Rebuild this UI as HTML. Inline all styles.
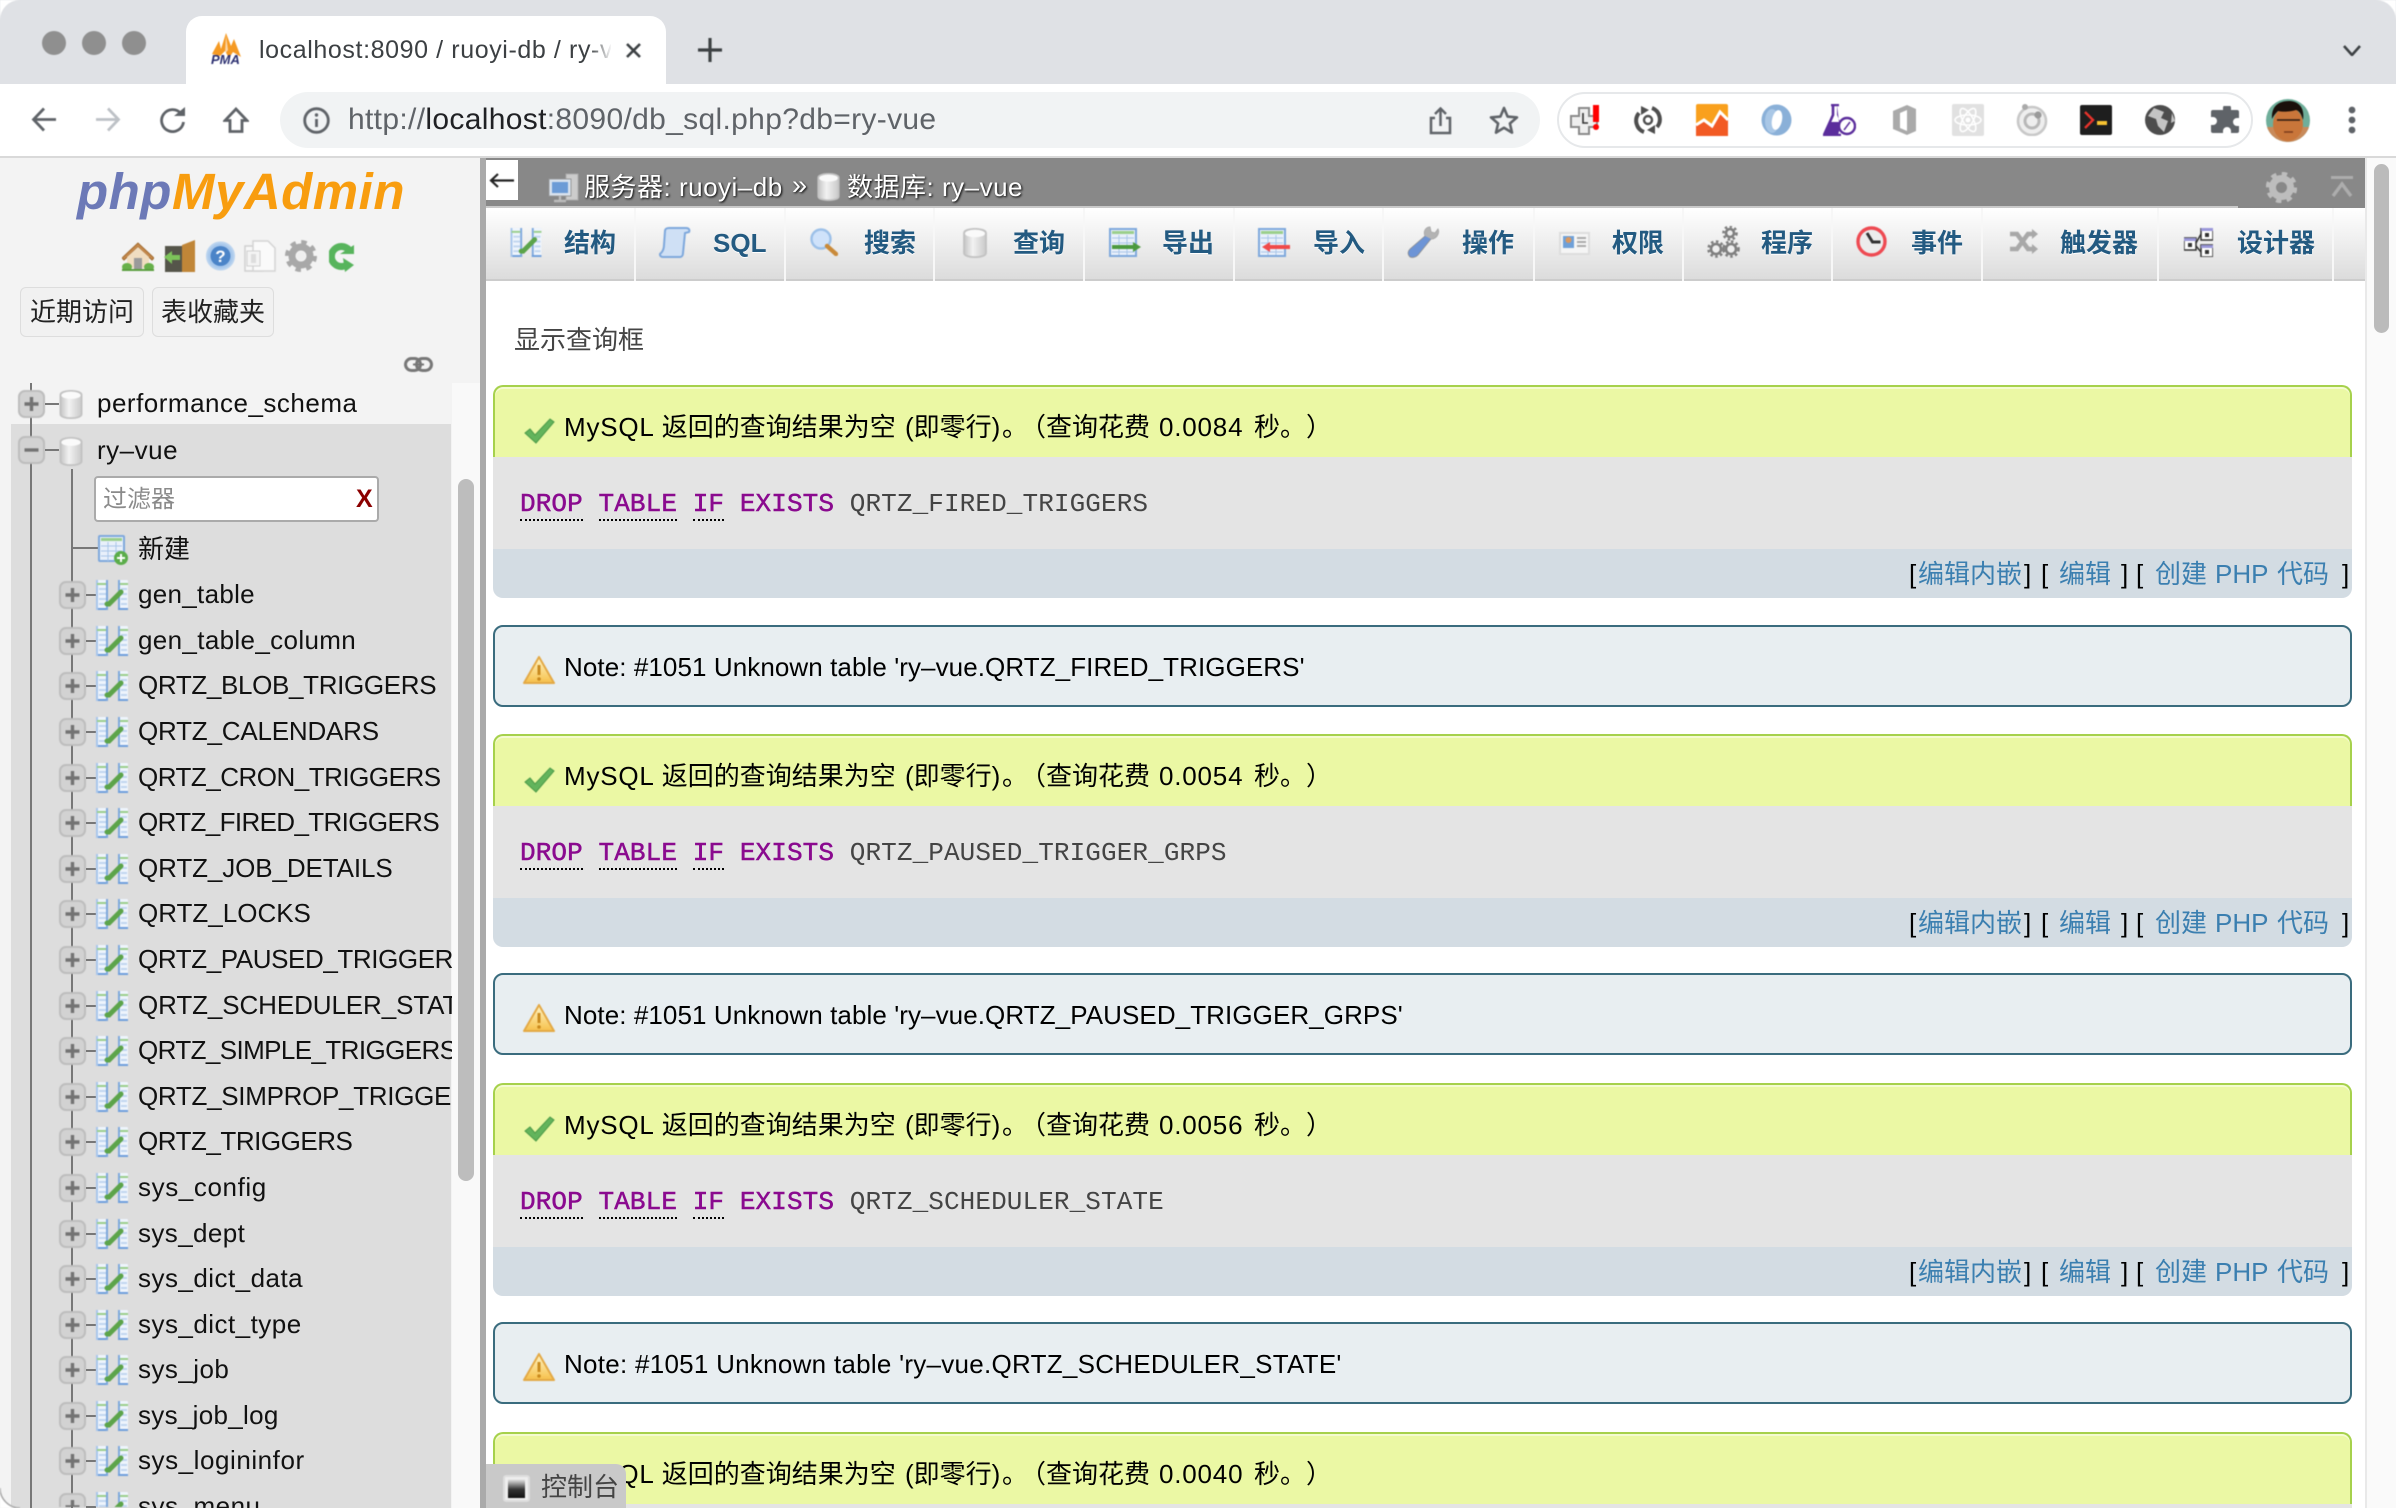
<!DOCTYPE html>
<html lang="zh">
<head>
<meta charset="utf-8">
<title>localhost:8090 / ruoyi-db / ry-vue</title>
<style>
html,body{margin:0;padding:0;width:2396px;height:1508px;overflow:hidden;background:#fff}
body{position:relative;font-family:"Liberation Sans","Noto Sans CJK SC",sans-serif;font-size:26px;color:#000}
.a{position:absolute;display:block}
svg.a,.r svg,.okh svg,.nt svg{filter:blur(.4px)}
.t{position:absolute;white-space:nowrap}
#strip{left:0;top:0;width:2396px;height:84px;background:#dfe1e5}
#tab{left:186px;top:16px;width:480px;height:68px;background:#fff;border-radius:16px 16px 0 0}
#toolbar{left:0;top:84px;width:2396px;height:72px;background:#fff}
#tbline{left:0;top:156px;width:2396px;height:2px;background:#d9d9d9}
#omni{left:280px;top:92px;width:1260px;height:56px;border-radius:28px;background:#f1f3f4}
#pill{left:1557px;top:92px;width:692px;height:52px;border:2px solid #e6e8ea;border-radius:28px}
#side{left:0;top:158px;width:480px;height:1350px;background:#f3f3f3;overflow:hidden}
#sb{left:452px;top:383px;width:28px;height:1125px;background:#f9f9f9}
#sbt{left:458px;top:479px;width:16px;height:702px;border-radius:8px;background:#bdbdbd}
#sel{left:11px;top:424px;width:440px;height:1084px;background:#ddd}
#split{left:480px;top:158px;width:6px;height:1350px;background:#aaa}
.btn{top:287px;height:48px;border:1px solid #ddd;border-radius:6px;background:#f1f1f1;line-height:48px;text-align:center;box-sizing:content-box;color:#222}
#tree{left:0;top:572.2px;width:452px;height:935.8px;overflow:hidden}
.r{position:relative;height:45.6px}
.r span{position:absolute;left:138px;top:0;line-height:45.6px;white-space:nowrap;color:#111}
.r svg{position:absolute}
.r .pb{left:59px;top:9px;width:27px;height:28px}
.r .h{position:absolute;left:86px;top:22px;width:10px;height:2px;background:#777}
.r .ti{left:96px;top:8px;width:32px;height:30px}
#topbar{left:486px;top:158px;width:1879px;height:48px;background:#888}
#topbar2{left:486px;top:206px;width:1752px;height:2px;background:#c9c9c9}
#topbar3{left:2238px;top:206px;width:127px;height:3px;background:#888}
#tabs{left:486px;top:208px;width:1879px;height:71px;background:linear-gradient(#fff,#dcdcdc);border-bottom:2px solid #ccc}
.sep{position:absolute;top:208px;width:2px;height:73px;background:#f7f7f7}
.tl{position:absolute;top:222px;line-height:42px;font-weight:700;color:#235a81;white-space:nowrap;text-shadow:0 1px 0 #fff}
.bc{position:absolute;top:167px;line-height:40px;color:#fff;white-space:nowrap;letter-spacing:.5px;text-shadow:1px 1px 2px #000}
#sct{left:2365px;top:158px;width:31px;height:1350px;background:#fafafa;border-left:2px solid #e9e9e9;box-sizing:border-box}
#sctt{left:2374px;top:164px;width:15px;height:169px;border-radius:8px;background:#bbb}
.ok{position:absolute;left:493px;width:1859px;height:213px}
.okh{position:absolute;left:0;top:0;width:1859px;height:72px;box-sizing:border-box;background:#ebf8a4;border:2px solid #a6d14c;border-bottom:0;border-radius:10px 10px 0 0;box-shadow:inset 0 2px 0 #f4fbd0}
.okh svg{position:absolute;left:28px;top:31px;width:32px;height:26px}
.okh span{position:absolute;left:69px;top:18px;line-height:44px;white-space:nowrap;color:#000;text-spacing-trim:space-all}
.okh i{font-style:normal;letter-spacing:.8px}
.okh .s2{left:410px}.okh .s3{left:507px}.okh .s4{left:525px}.okh .s5{left:664px;letter-spacing:.8px}.okh .s6{left:759px}
.code{position:absolute;left:0;top:72px;width:1859px;height:92px;background:#e4e4e4;font-family:"Liberation Mono",monospace;color:#444;font-size:26px}
.code div{position:absolute;left:27px;top:25px;line-height:44px;white-space:pre;letter-spacing:.1px}
.code b{color:#8a0a8f;font-weight:400;-webkit-text-stroke:.5px #8a0a8f}
.code u{text-decoration:none;border-bottom:2px dotted #000;padding-bottom:0}
.ft{position:absolute;left:0;top:164px;width:1859px;height:49px;background:#d3dce3;border-radius:0 0 10px 10px;color:#000}
.ft s,.ft em{position:absolute;top:2px;line-height:46px;text-decoration:none;font-style:normal;white-space:nowrap}
.ft em{color:#3b7fb0}
.nt{position:absolute;left:493px;width:1859px;height:82px;box-sizing:border-box;background:#e8eef1;border:2px solid #3a6c7e;border-radius:10px}
.nt svg{position:absolute;left:28px;top:28px;width:32px;height:30px}
.nt span{position:absolute;left:69px;top:18px;line-height:44px;white-space:nowrap;color:#000}
#con{left:486px;top:1464px;width:140px;height:44px;background:#c9c9c9;border-radius:0 10px 0 0}
</style>
</head>
<body>
<svg width="0" height="0" style="position:absolute">
<defs>
<linearGradient id="gd" x1="0" x2="1" y1="0" y2="0"><stop offset="0" stop-color="#c4c4c4"/><stop offset=".4" stop-color="#f2f2f2"/><stop offset="1" stop-color="#c9c9c9"/></linearGradient>
<linearGradient id="gw" x1="0" x2="0" y1="0" y2="1"><stop offset="0" stop-color="#fff6c8"/><stop offset="1" stop-color="#f6c04a"/></linearGradient>
<linearGradient id="gc" x1="0" x2="0" y1="0" y2="1"><stop offset="0" stop-color="#eee"/><stop offset=".55" stop-color="#333"/><stop offset="1" stop-color="#111"/></linearGradient>
<symbol id="p" viewBox="0 0 27 28"><rect x="1" y="1" width="25" height="26" rx="6" fill="#d2d2d2" stroke="#bdbdbd" stroke-width="2"/><path d="M13.500 7v14M6.500 14h14" stroke="#737373" stroke-width="3.400"/></symbol>
<symbol id="m" viewBox="0 0 27 28"><rect x="1" y="1" width="25" height="26" rx="6" fill="#d2d2d2" stroke="#bdbdbd" stroke-width="2"/><path d="M6.500 14h14" stroke="#737373" stroke-width="3.400"/></symbol>
<symbol id="t" viewBox="0 0 32 30">
<rect x="0" y="0" width="12" height="30" rx="1" fill="#eef4fc"/><rect x="0" y="28" width="12" height="2" fill="#6f9fdc"/><rect x="10" y="0" width="2" height="30" fill="#7ea8dc"/><rect x="0" y="0" width="2" height="30" fill="#a8c6ec"/><rect x="1" y="3" width="9" height="2" fill="#9bcf8c"/><path d="M3 9h7M3 14h7M3 19h7M3 24h7" stroke="#c0d5ef" stroke-width="2"/>
<rect x="22" y="0" width="10" height="30" rx="1" fill="#eef4fc"/><rect x="22" y="0" width="2" height="30" fill="#7ea8dc"/><rect x="22" y="28" width="10" height="2" fill="#6f9fdc"/><rect x="24" y="3" width="8" height="2" fill="#9bcf8c"/><path d="M25 9h6M25 14h6M25 19h6M25 24h6" stroke="#c0d5ef" stroke-width="2"/>
<path d="M11 24l2 0L25 12" fill="none" stroke="#5ca44a" stroke-width="5" stroke-linecap="round"/></symbol>
<symbol id="db" viewBox="0 0 24 30"><path d="M1 5c0-5.500 22-5.500 22 0v20c0 5.500-22 5.500-22 0z" fill="url(#gd)" stroke="#c2c2c2" stroke-width="1.800"/><ellipse cx="12" cy="5.500" rx="10" ry="3.800" fill="#fafafa"/></symbol>
<symbol id="ck" viewBox="0 0 32 26"><path d="M2 15l5-4 5 6L27 1l4 3-18 21z" fill="#63b45c" stroke="#4b9a48" stroke-width="1"/></symbol>
<symbol id="wn" viewBox="0 0 32 30"><path d="M16 2L31 28H1z" fill="url(#gw)" stroke="#e3a946" stroke-width="2" stroke-linejoin="round"/><path d="M16 10v10" stroke="#c98a1e" stroke-width="3"/><circle cx="16" cy="24" r="1.800" fill="#c98a1e"/></symbol>
<symbol id="gr" viewBox="0 0 32 32"><circle cx="16" cy="16" r="9" fill="none" stroke="#a8a8a8" stroke-width="7"/><circle cx="16" cy="16" r="13.500" fill="none" stroke="#a8a8a8" stroke-width="5" stroke-dasharray="5.300 5.300"/><circle cx="16" cy="16" r="4.500" fill="#eee"/></symbol>
</defs>
</svg>

<!-- browser chrome -->
<div class="a" id="strip"></div>
<svg class="a" style="left:42px;top:31px" width="104" height="24"><circle cx="12" cy="12" r="12" fill="#8f8f8f"/><circle cx="52" cy="12" r="12" fill="#8f8f8f"/><circle cx="92" cy="12" r="12" fill="#8f8f8f"/></svg>
<div class="a" id="tab"></div>
<svg class="a" style="left:210px;top:33px" width="33" height="32" viewBox="0 0 33 32"><path d="M2 21L9 8l2 8 5-16 5 13 3-7 7 18-8-5-4 6-4-7-5 5z" fill="#f59a23"/><path d="M16 2l2 15-3 4z" fill="#fff" opacity=".6"/><text x="1" y="31" font-family="Liberation Sans" font-size="13" font-style="italic" font-weight="700" fill="#2b2f70">PMA</text></svg>
<div class="t" style="left:259px;top:33px;width:352px;overflow:hidden;font-size:25px;letter-spacing:.6px;line-height:34px;color:#3c4043">localhost:8090 / ruoyi-db / ry-vue</div>
<div class="a" style="left:590px;top:30px;width:22px;height:38px;background:linear-gradient(90deg,rgba(255,255,255,0),#fff)"></div>
<svg class="a" style="left:625px;top:43px" width="17" height="15"><path d="M2 1l13 13M15 1L2 14" stroke="#3c4043" stroke-width="2.600"/></svg>
<svg class="a" style="left:698px;top:38px" width="24" height="24"><path d="M12 0v24M0 12h24" stroke="#3c4043" stroke-width="3.200"/></svg>
<svg class="a" style="left:2343px;top:45px" width="18" height="11"><path d="M1 1l8 9 8-9" fill="none" stroke="#3c4043" stroke-width="2.600"/></svg>
<div class="a" id="toolbar"></div>
<div class="a" id="tbline"></div>
<svg class="a" style="left:31px;top:107px" width="26" height="25"><path d="M25 12.500H3M13 1.500L2.500 12.500 13 23.500" fill="none" stroke="#5f6368" stroke-width="2.800"/></svg>
<svg class="a" style="left:95px;top:107px" width="26" height="25"><path d="M1 12.500h22M13 1.500l10.500 11L13 23.500" fill="none" stroke="#bdc1c6" stroke-width="2.800"/></svg>
<svg class="a" style="left:159px;top:107px" width="28" height="26"><path d="M22 6.500A11 11 0 1 0 24.500 15" fill="none" stroke="#5f6368" stroke-width="2.800"/><path d="M15 9h11V0z" fill="#5f6368"/></svg>
<svg class="a" style="left:223px;top:107px" width="26" height="26"><path d="M13 2L2 13.500h5v11h12v-11h5z" fill="none" stroke="#5f6368" stroke-width="2.800" stroke-linejoin="miter"/></svg>
<div class="a" id="omni"></div>
<svg class="a" style="left:303px;top:107px" width="27" height="27"><circle cx="13.500" cy="13.500" r="11.800" fill="none" stroke="#5f6368" stroke-width="2.800"/><path d="M13.500 12v8" stroke="#5f6368" stroke-width="2.800"/><circle cx="13.500" cy="8" r="1.700" fill="#5f6368"/></svg>
<div class="t" style="left:348px;top:100px;font-size:30px;letter-spacing:.33px;line-height:40px;color:#5f6368">http://<span style="color:#202124">localhost</span>:8090/db_sql.php?db=ry-vue</div>
<svg class="a" style="left:1429px;top:107px" width="23" height="28"><path d="M6 11H2v15h19V11h-4M11.500 19V2M6 7l5.500-5.500L17 7" fill="none" stroke="#5f6368" stroke-width="2.500"/></svg>
<svg class="a" style="left:1489px;top:106px" width="30" height="28"><path d="M15 2l3.600 8.600 9.400.8-7.100 6.100 2.100 9.100-8-4.800-8 4.800 2.100-9.100L2 11.400l9.400-.8z" fill="none" stroke="#5f6368" stroke-width="2.600" stroke-linejoin="round"/></svg>
<div class="a" id="pill"></div>
<svg class="a" style="left:1569px;top:105px" width="32" height="30"><path d="M10 3h10v8h8v11h-8v7H10v-7H2V11h8z" fill="#eee" stroke="#8a8a8a" stroke-width="2"/><path d="M14 8v10h5" fill="none" stroke="#333" stroke-width="1.600"/><rect x="24" y="0" width="6" height="17" fill="#f00"/><circle cx="27" cy="22" r="3" fill="#f00"/></svg>
<svg class="a" style="left:1633px;top:105px" width="30" height="30"><path d="M6 8A12 12 0 0 0 11 27M24 22A12 12 0 0 0 19 3" fill="none" stroke="#4e4e4e" stroke-width="4"/><path d="M8 1l8 4-8 5zM22 29l-8-4 8-5z" fill="#4e4e4e"/><circle cx="15" cy="15" r="4" fill="none" stroke="#4e4e4e" stroke-width="2.400"/></svg>
<svg class="a" style="left:1696px;top:104px" width="32" height="32"><rect width="32" height="32" rx="2" fill="#f9a01d"/><path d="M0 32V21l8-5 8 6 8-14 8 8v16z" fill="#f25a24"/><path d="M0 21l8-5 8 6 8-14 8 8" fill="none" stroke="#fff" stroke-width="3"/></svg>
<svg class="a" style="left:1760px;top:104px" width="33" height="32"><ellipse cx="16.500" cy="16" rx="15" ry="15.500" fill="#8ab0d8"/><ellipse cx="12" cy="17" rx="7" ry="12" fill="#a9c7e6"/><ellipse cx="17" cy="16" rx="5" ry="10" fill="#fff" transform="rotate(12 17 16)"/></svg>
<svg class="a" style="left:1823px;top:104px" width="33" height="32"><path d="M8 1h8M10 1v10L1 31h17" fill="none" stroke="#5b2d9c" stroke-width="2.600"/><path d="M14 1v10l4 9-3 11H1l6-13h9z" fill="#5b2d9c"/><circle cx="24" cy="22" r="8" fill="#fff" stroke="#5b2d9c" stroke-width="2.400"/><path d="M21 26l6-8" stroke="#5b2d9c" stroke-width="1.500"/></svg>
<svg class="a" style="left:1890px;top:104px" width="27" height="32"><path d="M3 7L17 1l9 4v22l-9 4L3 25z" fill="#aaa"/><path d="M10 9l7-3v21l-7-3z" fill="#fff"/></svg>
<svg class="a" style="left:1952px;top:104px" width="32" height="32"><rect width="32" height="32" rx="2" fill="#e1e1e1"/><g fill="none" stroke="#fff" stroke-width="1.600"><ellipse cx="16" cy="16" rx="13" ry="5"/><ellipse cx="16" cy="16" rx="13" ry="5" transform="rotate(60 16 16)"/><ellipse cx="16" cy="16" rx="13" ry="5" transform="rotate(120 16 16)"/></g><circle cx="16" cy="16" r="2.500" fill="#fff"/></svg>
<svg class="a" style="left:2016px;top:104px" width="32" height="32"><circle cx="16" cy="17" r="14" fill="#eee" stroke="#c8c8c8" stroke-width="2.600"/><circle cx="16" cy="17" r="7" fill="none" stroke="#b8b8b8" stroke-width="3"/><circle cx="22" cy="11" r="3.600" fill="#9a9a9a"/><circle cx="9" cy="3" r="3" fill="#aaa"/></svg>
<svg class="a" style="left:2080px;top:105px" width="32" height="30"><rect width="32" height="30" rx="2" fill="#1e1e1e"/><path d="M5 7l8 8-8 8" fill="none" stroke="#e8332b" stroke-width="2.400"/><rect x="17" y="16" width="10" height="4" fill="#f7c331"/></svg>
<svg class="a" style="left:2145px;top:105px" width="30" height="30"><circle cx="15" cy="15" r="15" fill="#4d4d4d"/><path d="M9 3l10 4-3 6 7 3-4 11-6-6-2-7-8-3zM27 8l3 8-4 2z" fill="#c4c4c4"/></svg>
<svg class="a" style="left:2210px;top:106px" width="29" height="28"><path d="M9 5h4V3a4 4 0 0 1 8 0v2h6a2 2 0 0 1 2 2v6h-2a4 4 0 0 0 0 8h2v5a2 2 0 0 1-2 2h-6v-2a4 4 0 0 0-8 0v2H3a2 2 0 0 1-2-2v-6h2a4 4 0 0 0 0-8H1V7a2 2 0 0 1 2-2z" transform="translate(0 -1)" fill="#5f6368"/></svg>
<svg class="a" style="left:2266px;top:99px" width="44" height="43"><clipPath id="av"><ellipse cx="22" cy="21.500" rx="22" ry="21.500"/></clipPath><g clip-path="url(#av)"><rect width="44" height="43" fill="#6fae9a"/><rect y="28" width="44" height="15" fill="#c88a5a"/><ellipse cx="22" cy="25" rx="15" ry="17" fill="#c9763a"/><path d="M6 20C5 6 14 2 23 2s16 6 14 19c-2-7-4-9-7-10-6 2-14 2-18 1-2 2-4 4-6 8z" fill="#1a0f0a"/><path d="M11 21h9M25 21h9M20 21h5" stroke="#2a1a10" stroke-width="1.600"/><path d="M18 33h9" stroke="#7c3b1c" stroke-width="1.600"/></g></svg>
<svg class="a" style="left:2348px;top:106px" width="8" height="28"><circle cx="4" cy="4" r="3.400" fill="#5f6368"/><circle cx="4" cy="14" r="3.400" fill="#5f6368"/><circle cx="4" cy="24" r="3.400" fill="#5f6368"/></svg>

<!-- sidebar -->
<div class="a" id="side"></div>
<div class="a" id="sb"></div>
<div class="a" id="sbt"></div>
<div class="a" id="sel"></div>
<div class="t" style="left:77px;top:163px;font-size:51px;line-height:58px;font-weight:700;font-style:italic;letter-spacing:.5px;color:#f89d0f"><span style="color:#6c79b7">php</span>MyAdmin</div>
<svg class="a" style="left:122px;top:241px" width="32" height="30"><path d="M16 2L0 17l2 2L16 6l14 13 2-2z" fill="#c68a4e" stroke="#a0692c"/><path d="M5 16L16 6l11 10v11H5z" fill="#f0ddc0"/><rect x="12" y="17" width="8" height="11" fill="#9a9a9a"/><ellipse cx="5" cy="26" rx="5" ry="4" fill="#67b04a"/><ellipse cx="27" cy="26" rx="5" ry="4" fill="#67b04a"/><rect x="0" y="28" width="32" height="2" fill="#5a9e3e"/></svg>
<svg class="a" style="left:163px;top:240px" width="32" height="32"><rect x="2" y="6" width="17" height="26" fill="#55554a"/><path d="M19 5l13-5v32H19z" fill="#c08638"/><path d="M1 17l8-6v4h8v5H9v4z" fill="#7dc35a"/></svg>
<svg class="a" style="left:206px;top:241px" width="29" height="30"><circle cx="14.500" cy="15" r="13.500" fill="#a8c8ec" stroke="#b8d2ee" stroke-width="2"/><circle cx="14.500" cy="15" r="10" fill="#4b84c8"/><text x="14.500" y="21" text-anchor="middle" font-family="Liberation Sans" font-size="17" font-weight="700" fill="#fff">?</text></svg>
<svg class="a" style="left:244px;top:240px" width="32" height="32"><rect x="1" y="6" width="18" height="25" fill="#f8f8f8" stroke="#cfcfcf" stroke-width="1.500"/><path d="M9 1h15l7 7v23H9z" fill="#fafafa" stroke="#d4d4d4" stroke-width="1.500"/><rect x="3" y="11" width="13" height="15" fill="#f4f4f4" stroke="#d0d0d0"/><rect x="7" y="14" width="5" height="9" fill="#ddd"/></svg>
<svg class="a" style="left:285px;top:240px" width="32" height="32"><use href="#gr"/></svg>
<svg class="a" style="left:329px;top:243px" width="26" height="29"><path d="M20 7A10 10 0 1 0 20 20" fill="none" stroke="#57b45c" stroke-width="7"/><path d="M11 11h14V2zM14 15l11 7-9 7z" fill="#57b45c"/></svg>
<div class="t btn" style="left:20px;width:122px">近期访问</div>
<div class="t btn" style="left:152px;width:120px">表收藏夹</div>
<svg class="a" style="left:404px;top:357px" width="29" height="15"><rect x="1.500" y="1.500" width="15" height="12" rx="6" fill="none" stroke="#777" stroke-width="3"/><rect x="12.500" y="1.500" width="15" height="12" rx="6" fill="none" stroke="#777" stroke-width="3"/><path d="M9 7.500h11" stroke="#777" stroke-width="2"/></svg>

<div class="a" style="left:30px;top:383px;width:2px;height:1125px;background:#777"></div>
<div class="a" style="left:71px;top:469px;width:2px;height:1039px;background:#777"></div>
<svg class="a" style="left:18px;top:390px;width:27px;height:28px"><use href="#p"/></svg>
<div class="a" style="left:45px;top:403px;width:14px;height:2px;background:#777"></div>
<svg class="a" style="left:59px;top:390px;width:24px;height:29px"><use href="#db"/></svg>
<div class="t" style="left:97px;top:380px;line-height:46px;letter-spacing:.5px;color:#111">performance_schema</div>
<svg class="a" style="left:18px;top:436px;width:27px;height:28px"><use href="#m"/></svg>
<div class="a" style="left:45px;top:449px;width:14px;height:2px;background:#777"></div>
<svg class="a" style="left:59px;top:437px;width:24px;height:29px"><use href="#db"/></svg>
<div class="t" style="left:97px;top:427px;line-height:46px;letter-spacing:.5px;color:#111">ry–vue</div>
<div class="a" style="left:94px;top:476px;width:281px;height:42px;background:#fff;border:2px solid #aaa;border-radius:4px"></div>
<div class="t" style="left:103px;top:479px;font-size:24px;line-height:42px;color:#8a8a8a">过滤器</div>
<div class="t" style="left:356px;top:478px;font-size:25px;line-height:42px;font-weight:700;color:#8b0000">X</div>
<div class="a" style="left:72px;top:547px;width:26px;height:2px;background:#777"></div>
<svg class="a" style="left:98px;top:535px" width="30" height="30"><rect x="1" y="1" width="25" height="25" rx="1" fill="#e8f0fb" stroke="#7ea8dc" stroke-width="2"/><rect x="3" y="3" width="21" height="3" fill="#9bcf8c"/><path d="M3 11h21M3 16h21M3 21h21M10 7v19M18 7v19" stroke="#a9c5e8"/><circle cx="23" cy="23" r="7" fill="#5bad4a"/><path d="M23 19v8M19 23h8" stroke="#fff" stroke-width="2"/></svg>
<div class="t" style="left:138px;top:526px;line-height:46px;color:#111">新建</div>

<div class="a" id="tree">
<div class="r"><svg class="pb"><use href="#p"/></svg><i class="h"></i><svg class="ti"><use href="#t"/></svg><span style="letter-spacing:.3px">gen_table</span></div>
<div class="r"><svg class="pb"><use href="#p"/></svg><i class="h"></i><svg class="ti"><use href="#t"/></svg><span style="letter-spacing:.35px">gen_table_column</span></div>
<div class="r"><svg class="pb"><use href="#p"/></svg><i class="h"></i><svg class="ti"><use href="#t"/></svg><span style="letter-spacing:-.34px">QRTZ_BLOB_TRIGGERS</span></div>
<div class="r"><svg class="pb"><use href="#p"/></svg><i class="h"></i><svg class="ti"><use href="#t"/></svg><span style="letter-spacing:-.2px">QRTZ_CALENDARS</span></div>
<div class="r"><svg class="pb"><use href="#p"/></svg><i class="h"></i><svg class="ti"><use href="#t"/></svg><span style="letter-spacing:-.5px">QRTZ_CRON_TRIGGERS</span></div>
<div class="r"><svg class="pb"><use href="#p"/></svg><i class="h"></i><svg class="ti"><use href="#t"/></svg><span style="letter-spacing:-.63px">QRTZ_FIRED_TRIGGERS</span></div>
<div class="r"><svg class="pb"><use href="#p"/></svg><i class="h"></i><svg class="ti"><use href="#t"/></svg><span style="letter-spacing:-.1px">QRTZ_JOB_DETAILS</span></div>
<div class="r"><svg class="pb"><use href="#p"/></svg><i class="h"></i><svg class="ti"><use href="#t"/></svg><span>QRTZ_LOCKS</span></div>
<div class="r"><svg class="pb"><use href="#p"/></svg><i class="h"></i><svg class="ti"><use href="#t"/></svg><span style="left:138px;width:314px;overflow:hidden;letter-spacing:-.4px">QRTZ_PAUSED_TRIGGER_GRPS</span></div>
<div class="r"><svg class="pb"><use href="#p"/></svg><i class="h"></i><svg class="ti"><use href="#t"/></svg><span style="width:314px;overflow:hidden;letter-spacing:-.1px">QRTZ_SCHEDULER_STATE</span></div>
<div class="r"><svg class="pb"><use href="#p"/></svg><i class="h"></i><svg class="ti"><use href="#t"/></svg><span style="width:314px;overflow:hidden;letter-spacing:-.6px">QRTZ_SIMPLE_TRIGGERS</span></div>
<div class="r"><svg class="pb"><use href="#p"/></svg><i class="h"></i><svg class="ti"><use href="#t"/></svg><span style="width:314px;overflow:hidden;letter-spacing:-.3px">QRTZ_SIMPROP_TRIGGERS</span></div>
<div class="r"><svg class="pb"><use href="#p"/></svg><i class="h"></i><svg class="ti"><use href="#t"/></svg><span style="letter-spacing:-.47px">QRTZ_TRIGGERS</span></div>
<div class="r"><svg class="pb"><use href="#p"/></svg><i class="h"></i><svg class="ti"><use href="#t"/></svg><span style="letter-spacing:.6px">sys_config</span></div>
<div class="r"><svg class="pb"><use href="#p"/></svg><i class="h"></i><svg class="ti"><use href="#t"/></svg><span style="letter-spacing:.4px">sys_dept</span></div>
<div class="r"><svg class="pb"><use href="#p"/></svg><i class="h"></i><svg class="ti"><use href="#t"/></svg><span style="letter-spacing:.47px">sys_dict_data</span></div>
<div class="r"><svg class="pb"><use href="#p"/></svg><i class="h"></i><svg class="ti"><use href="#t"/></svg><span style="letter-spacing:.47px">sys_dict_type</span></div>
<div class="r"><svg class="pb"><use href="#p"/></svg><i class="h"></i><svg class="ti"><use href="#t"/></svg><span style="letter-spacing:.45px">sys_job</span></div>
<div class="r"><svg class="pb"><use href="#p"/></svg><i class="h"></i><svg class="ti"><use href="#t"/></svg><span style="letter-spacing:.3px">sys_job_log</span></div>
<div class="r"><svg class="pb"><use href="#p"/></svg><i class="h"></i><svg class="ti"><use href="#t"/></svg><span style="letter-spacing:.55px">sys_logininfor</span></div>
<div class="r" style="height:23.800px;overflow:hidden"><svg class="pb" style="height:14px"><use href="#p" width="27" height="28"/></svg><i class="h"></i><svg class="ti" style="height:15px"><use href="#t" width="32" height="30"/></svg><span style="height:23.800px;overflow:hidden;letter-spacing:.5px">sys_menu</span></div>
</div>
<div class="a" id="split"></div>

<!-- main header -->
<div class="a" id="topbar"></div>
<div class="a" id="topbar2"></div>
<div class="a" id="topbar3"></div>
<div class="a" style="left:486px;top:160px;width:32px;height:40px;background:#fff"></div>
<svg class="a" style="left:488px;top:172px" width="27" height="17"><path d="M26 8.500H3M10 2L3 8.500 10 15" fill="none" stroke="#222" stroke-width="2.200"/></svg>
<svg class="a" style="left:548px;top:173px" width="31" height="30"><path d="M18 1h12v26H18z" fill="#ccc" stroke="#aaa"/><rect x="1" y="6" width="22" height="17" fill="#d8e2ee" stroke="#999"/><rect x="4" y="9" width="16" height="11" fill="#6c9bd6"/><path d="M12 23v4M6 28h12" stroke="#bbb" stroke-width="2.400"/></svg>
<div class="bc" style="left:584px">服务器: ruoyi–db</div>
<div class="bc" style="left:792px;font-size:27px;top:165px">»</div>
<svg class="a" style="left:817px;top:173px;width:23px;height:28px"><use href="#db"/></svg>
<div class="bc" style="left:847px">数据库: ry–vue</div>
<svg class="a" style="left:2266px;top:172px" width="31" height="31"><circle cx="15.500" cy="15.500" r="9" fill="none" stroke="#bdbdbd" stroke-width="7"/><circle cx="15.500" cy="15.500" r="13.500" fill="none" stroke="#bdbdbd" stroke-width="4.500" stroke-dasharray="5.300 5.300"/></svg>
<svg class="a" style="left:2331px;top:176px" width="22" height="22"><path d="M0 1.500h22" stroke="#adadad" stroke-width="3"/><path d="M2 20l9-12 9 12" fill="none" stroke="#adadad" stroke-width="3.400"/></svg>

<div class="a" id="tabs"></div>
<i class="sep" style="left:634px"></i><i class="sep" style="left:784px"></i><i class="sep" style="left:933px"></i><i class="sep" style="left:1083px"></i><i class="sep" style="left:1233px"></i><i class="sep" style="left:1382px"></i><i class="sep" style="left:1533px"></i><i class="sep" style="left:1682px"></i><i class="sep" style="left:1831px"></i><i class="sep" style="left:1981px"></i><i class="sep" style="left:2157px"></i><i class="sep" style="left:2332px"></i>

<svg class="a" style="left:510px;top:228px;width:32px;height:29px"><use href="#t"/></svg>
<div class="tl" style="left:564px">结构</div>
<svg class="a" style="left:659px;top:227px" width="32" height="31"><path d="M6 4c0-2 2-3 4-3h17c3 0 4 2 3 4l-4 1-2 20c0 2-1 4-3 4H4c-3 0-4-3-2-4 2-2 3-4 3-8z" fill="#cfe0f5" stroke="#7ea8dc" stroke-width="2"/></svg>
<div class="tl" style="left:713px">SQL</div>
<svg class="a" style="left:810px;top:228px" width="28" height="28"><circle cx="11" cy="11" r="9.500" fill="#cfe2fa" stroke="#9cc0e8" stroke-width="2.400"/><path d="M17 18l9 8" stroke="#c98a3a" stroke-width="4.400" stroke-linecap="round"/></svg>
<div class="tl" style="left:864px">搜索</div>
<svg class="a" style="left:962px;top:228px;width:26px;height:30px"><use href="#db"/></svg>
<div class="tl" style="left:1013px">查询</div>
<svg class="a" style="left:1109px;top:228px" width="32" height="29"><rect x="1" y="1" width="26" height="27" fill="#e8f0fb" stroke="#7ea8dc" stroke-width="2"/><rect x="3" y="3" width="22" height="3" fill="#9bcf8c"/><path d="M3 10h22M3 15h22M3 24h22M10 7v20M18 7v20" stroke="#a9c5e8"/><path d="M3 17h21v-3l8 5-8 5v-3H3z" fill="#4c9a3f"/></svg>
<div class="tl" style="left:1162px">导出</div>
<svg class="a" style="left:1258px;top:228px" width="32" height="29"><rect x="1" y="1" width="26" height="27" fill="#e8f0fb" stroke="#7ea8dc" stroke-width="2"/><rect x="3" y="3" width="22" height="3" fill="#9bcf8c"/><path d="M3 10h22M3 15h22M3 24h22M10 7v20M18 7v20" stroke="#a9c5e8"/><path d="M32 17H12v-3l-8 5 8 5v-3h20z" fill="#f04a4a"/></svg>
<div class="tl" style="left:1313px">导入</div>
<svg class="a" style="left:1407px;top:226px" width="33" height="32"><path d="M3 31c-3-3-2-6 0-8L18 10c-2-5 1-9 5-9l1 5 4 1 3-4c2 5-2 10-7 10L11 29c-2 2-5 3-8 2z" fill="#6d94d6" stroke="#8b8b8b" stroke-width=".8"/><path d="M18 10c-2-5 1-9 5-9l1 5 4 1 3-4c2 5-2 10-7 10z" fill="#b3b3b3"/></svg>
<div class="tl" style="left:1462px">操作</div>
<svg class="a" style="left:1559px;top:232px" width="31" height="23"><rect x="1" y="1" width="29" height="21" fill="#f5f5f5" stroke="#ddd" stroke-width="2"/><rect x="4" y="4" width="11" height="12" fill="#6fa0d8"/><circle cx="9.500" cy="8" r="3" fill="#d9985f"/><path d="M18 6h9M18 10h9M18 14h9" stroke="#aaa" stroke-width="2"/></svg>
<div class="tl" style="left:1612px">权限</div>
<svg class="a" style="left:1707px;top:226px" width="33" height="32"><g fill="#eee" stroke="#7f7f7f" stroke-width="2.600"><circle cx="23" cy="7" r="4"/><circle cx="9" cy="23" r="5"/><circle cx="24" cy="23" r="5"/></g><g fill="none" stroke="#7f7f7f" stroke-width="2.600" stroke-dasharray="2.500 2.500"><circle cx="23" cy="7" r="6.500"/><circle cx="9" cy="23" r="7.500"/><circle cx="24" cy="23" r="7.500"/></g></svg>
<div class="tl" style="left:1761px">程序</div>
<svg class="a" style="left:1856px;top:226px" width="31" height="31"><circle cx="15.500" cy="15.500" r="13.500" fill="#ececec" stroke="#ee4a52" stroke-width="3.400"/><path d="M11 7l5.500 9h8" fill="none" stroke="#333" stroke-width="3"/></svg>
<div class="tl" style="left:1911px">事件</div>
<svg class="a" style="left:2009px;top:229px" width="29" height="25"><path d="M1 5h7l11 15h6M1 20h7L19 5h6" fill="none" stroke="#a8a8a8" stroke-width="4.600"/><path d="M23 0l6 5-6 5zM23 15l6 5-6 5z" fill="#a8a8a8"/></svg>
<div class="tl" style="left:2060px">触发器</div>
<svg class="a" style="left:2184px;top:228px" width="29" height="29"><rect x="17" y="0" width="12" height="12" fill="#fff" stroke="#333" stroke-width="1.500"/><rect x="17" y="0" width="12" height="3" fill="#9a97d9"/><rect x="0" y="10" width="12" height="12" fill="#fff" stroke="#333" stroke-width="1.500"/><rect x="0" y="10" width="12" height="3" fill="#9a97d9"/><rect x="17" y="17" width="12" height="12" fill="#fff" stroke="#333" stroke-width="1.500"/><rect x="17" y="17" width="12" height="3" fill="#9a97d9"/><path d="M12 15L17 6M12 18l5 6" stroke="#333" stroke-width="1.500"/><rect x="21" y="5" width="4" height="4" fill="#333"/><rect x="4" y="15" width="4" height="4" fill="#333"/><rect x="21" y="22" width="4" height="4" fill="#333"/></svg>
<div class="tl" style="left:2237px">设计器</div>

<div class="a" id="sct"></div>
<div class="a" id="sctt"></div>

<!-- content -->
<div class="t" style="left:514px;top:318px;line-height:44px;color:#444">显示查询框</div>

<div class="ok" style="top:385px">
<div class="okh"><svg><use href="#ck"/></svg><span><i>MySQL </i>返回的查询结果为空</span><span class="s2">(即零行)</span><span class="s3">。</span><span class="s4">（查询花费</span><span class="s5">0.0084</span><span class="s6">秒。）</span></div>
<div class="code"><div><b><u>DROP</u></b> <b><u>TABLE</u></b> <b><u>IF</u></b> <b>EXISTS</b> QRTZ_FIRED_TRIGGERS</div></div>
<div class="ft"><s style="left:1416px">[</s><em style="left:1425px">编辑内嵌</em><s style="left:1531px">]</s><s style="left:1548px">[</s><em style="left:1566px">编辑</em><s style="left:1628px">]</s><s style="left:1643px">[</s><em style="left:1662px">创建</em><em style="left:1722px">PHP</em><em style="left:1784px">代码</em><s style="left:1849px">]</s></div>
</div>
<div class="nt" style="top:625px"><svg><use href="#wn"/></svg><span style="letter-spacing:.08px">Note: #1051 Unknown table 'ry–vue.QRTZ_FIRED_TRIGGERS'</span></div>

<div class="ok" style="top:734px">
<div class="okh"><svg><use href="#ck"/></svg><span><i>MySQL </i>返回的查询结果为空</span><span class="s2">(即零行)</span><span class="s3">。</span><span class="s4">（查询花费</span><span class="s5">0.0054</span><span class="s6">秒。）</span></div>
<div class="code"><div><b><u>DROP</u></b> <b><u>TABLE</u></b> <b><u>IF</u></b> <b>EXISTS</b> QRTZ_PAUSED_TRIGGER_GRPS</div></div>
<div class="ft"><s style="left:1416px">[</s><em style="left:1425px">编辑内嵌</em><s style="left:1531px">]</s><s style="left:1548px">[</s><em style="left:1566px">编辑</em><s style="left:1628px">]</s><s style="left:1643px">[</s><em style="left:1662px">创建</em><em style="left:1722px">PHP</em><em style="left:1784px">代码</em><s style="left:1849px">]</s></div>
</div>
<div class="nt" style="top:973px"><svg><use href="#wn"/></svg><span style="letter-spacing:.08px">Note: #1051 Unknown table 'ry–vue.QRTZ_PAUSED_TRIGGER_GRPS'</span></div>

<div class="ok" style="top:1083px">
<div class="okh"><svg><use href="#ck"/></svg><span><i>MySQL </i>返回的查询结果为空</span><span class="s2">(即零行)</span><span class="s3">。</span><span class="s4">（查询花费</span><span class="s5">0.0056</span><span class="s6">秒。）</span></div>
<div class="code"><div><b><u>DROP</u></b> <b><u>TABLE</u></b> <b><u>IF</u></b> <b>EXISTS</b> QRTZ_SCHEDULER_STATE</div></div>
<div class="ft"><s style="left:1416px">[</s><em style="left:1425px">编辑内嵌</em><s style="left:1531px">]</s><s style="left:1548px">[</s><em style="left:1566px">编辑</em><s style="left:1628px">]</s><s style="left:1643px">[</s><em style="left:1662px">创建</em><em style="left:1722px">PHP</em><em style="left:1784px">代码</em><s style="left:1849px">]</s></div>
</div>
<div class="nt" style="top:1322px"><svg><use href="#wn"/></svg><span style="letter-spacing:.27px">Note: #1051 Unknown table 'ry–vue.QRTZ_SCHEDULER_STATE'</span></div>

<div class="ok" style="top:1432px;height:76px;overflow:hidden">
<div class="okh"><svg><use href="#ck"/></svg><span><i>MySQL </i>返回的查询结果为空</span><span class="s2">(即零行)</span><span class="s3">。</span><span class="s4">（查询花费</span><span class="s5">0.0040</span><span class="s6">秒。）</span></div>
<div class="code" style="height:4px"></div>
</div>

<div class="a" id="con"></div>
<svg class="a" style="left:503px;top:1475px" width="27" height="27"><rect x="1" y="1" width="25" height="25" rx="2" fill="#eee" stroke="#ddd" stroke-width="2"/><rect x="5" y="4" width="17" height="19" fill="url(#gc)"/></svg>
<div class="t" style="left:541px;top:1467px;line-height:41px;color:#444">控制台</div>

<!-- window corners -->
<svg class="a" style="left:0;top:0" width="20" height="20"><path d="M0 0h20A20 20 0 0 0 0 20z" fill="#fff"/></svg>
<svg class="a" style="left:2376px;top:0" width="20" height="20"><path d="M20 0H0a20 20 0 0 1 20 20z" fill="#fff"/></svg>
<svg class="a" style="left:0;top:1488px" width="20" height="20"><path d="M0 20h20A20 20 0 0 1 0 0z" fill="#fff"/><path d="M20 20A20 20 0 0 1 0 0" fill="none" stroke="#aaa" stroke-width="1.500"/></svg>
</body>
</html>
